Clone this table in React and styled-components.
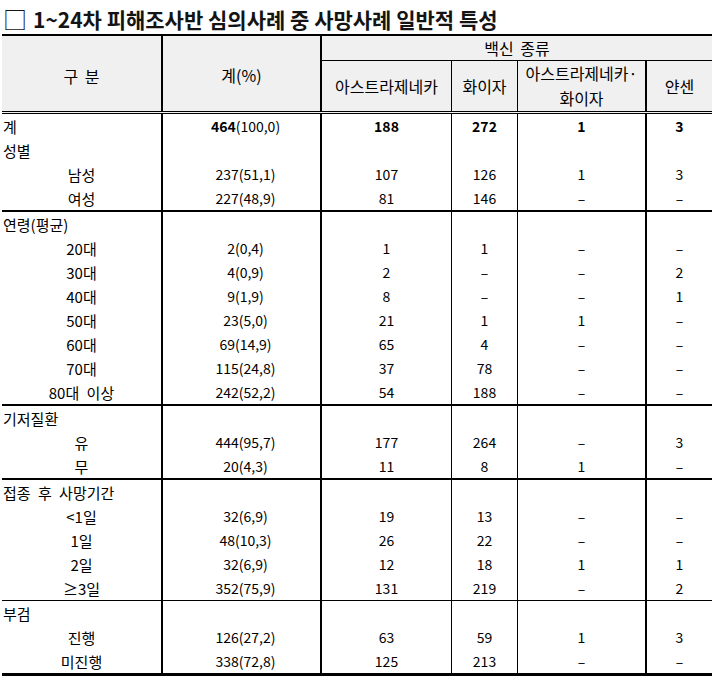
import styled, { createGlobalStyle } from "styled-components";

const GlobalStyle = createGlobalStyle`
  body {
    margin: 0;
    background: #fff;
    color: #000;
    font-family: "Noto Sans CJK KR", "Noto Sans", sans-serif;
  }
`;

// column widths include each cell's right border
const COLS = "161px 159px 130px 66px 129px 65px";
const EDGES = ["2px", "2px", "1px", "1px", "2px", "0"];

const groups = [
    {
        line: "2px solid #000",
        rows: [
            { label: "계", top: true, bold: true, total: ["464", "(100,0)"], values: ["188", "272", "1", "3"] },
            { label: "성별", top: true },
            { label: "남성", total: "237(51,1)", values: ["107", "126", "1", "3"] },
            { label: "여성", total: "227(48,9)", values: ["81", "146", "–", "–"] },
        ],
    },
    {
        line: "2px solid #000",
        rows: [
            { label: "연령(평균)", top: true },
            { label: "20대", total: "2(0,4)", values: ["1", "1", "–", "–"] },
            { label: "30대", total: "4(0,9)", values: ["2", "–", "–", "2"] },
            { label: "40대", total: "9(1,9)", values: ["8", "–", "–", "1"] },
            { label: "50대", total: "23(5,0)", values: ["21", "1", "1", "–"] },
            { label: "60대", total: "69(14,9)", values: ["65", "4", "–", "–"] },
            { label: "70대", total: "115(24,8)", values: ["37", "78", "–", "–"] },
            { label: "80대 이상", total: "242(52,2)", values: ["54", "188", "–", "–"] },
        ],
    },
    {
        line: "2px solid #000",
        rows: [
            { label: "기저질환", top: true },
            { label: "유", total: "444(95,7)", values: ["177", "264", "–", "3"] },
            { label: "무", total: "20(4,3)", values: ["11", "8", "1", "–"] },
        ],
    },
    {
        line: "1px solid #000",
        rows: [
            { label: "접종 후 사망기간", top: true },
            { label: "<1일", total: "32(6,9)", values: ["19", "13", "–", "–"] },
            { label: "1일", total: "48(10,3)", values: ["26", "22", "–", "–"] },
            { label: "2일", total: "32(6,9)", values: ["12", "18", "1", "1"] },
            { label: "≥3일", total: "352(75,9)", values: ["131", "219", "–", "2"] },
        ],
    },
    {
        line: "none",
        rows: [
            { label: "부검", top: true },
            { label: "진행", total: "126(27,2)", values: ["63", "59", "1", "3"] },
            { label: "미진행", total: "338(72,8)", values: ["125", "213", "–", "–"] },
        ],
    },
];

const App = () => {
    return (
        <>
            <GlobalStyle />
            <Page>
                <Title>
                    <Bullet>□</Bullet>
                    1~24차 피해조사반 심의사례 중 사망사례 일반적 특성
                </Title>
                <Table>
                    <Head>
                        <HeadCell $area="1 / 1 / 3 / 2" $edge={EDGES[0]} $pad="6px">구 분</HeadCell>
                        <HeadCell $area="1 / 2 / 3 / 3" $edge={EDGES[1]} $pad="3px">계(%)</HeadCell>
                        <HeadCell $area="1 / 3 / 2 / 7" $edge="0" $under>백신 종류</HeadCell>
                        <HeadCell $area="2 / 3 / 3 / 4" $edge={EDGES[2]}>아스트라제네카</HeadCell>
                        <HeadCell $area="2 / 4 / 3 / 5" $edge={EDGES[3]}>화이자</HeadCell>
                        <HeadCell $area="2 / 5 / 3 / 6" $edge={EDGES[4]}>아스트라제네카·<br />화이자</HeadCell>
                        <HeadCell $area="2 / 6 / 3 / 7" $edge={EDGES[5]}>얀센</HeadCell>
                    </Head>
                    {groups.map((group, gi) => (
                        <Group key={gi} $line={group.line}>
                            {group.rows.map((row, ri) => (
                                <Row key={ri} row={row} />
                            ))}
                        </Group>
                    ))}
                </Table>
            </Page>
        </>
    );
};

const Row = ({ row }) => {
    const values = row.values || ["", "", "", ""];
    return (
        <>
            <Label $edge={EDGES[0]} $top={row.top}>{row.label}</Label>
            <Cell $edge={EDGES[1]} $pad="8px">
                {Array.isArray(row.total)
                    ? <><Strong>{row.total[0]}</Strong>{row.total[1]}</>
                    : row.total}
            </Cell>
            {values.map((v, i) => (
                <Cell key={i} $edge={EDGES[i + 2]} $bold={row.bold}>{v}</Cell>
            ))}
        </>
    );
};

const Page = styled.div`
    width: 712px;
`;

const Title = styled.h1`
    margin: 0;
    height: 34px;
    padding: 3px 0 0 3px;
    box-sizing: border-box;
    display: flex;
    align-items: center;
    font-size: 21px;
    font-weight: 700;
    color: #141414;
    white-space: nowrap;
`;

const Bullet = styled.span`
    font-size: 24px;
    font-weight: 400;
    margin-right: 6px;
`;

const Table = styled.div`
    margin-left: 2px;
    width: 710px;
    border-top: 2px solid #000;
    border-bottom: 3px solid #000;
`;

const Head = styled.div`
    display: grid;
    grid-template-columns: ${COLS};
    grid-template-rows: 25px 50px;
    background: #f0f0f0;
    border-bottom: 3px double #000;
    font-size: 16px;
    line-height: 25px;
    word-spacing: 3px;
`;

const HeadCell = styled.div`
    grid-area: ${p => p.$area};
    display: flex;
    align-items: center;
    justify-content: center;
    text-align: center;
    box-sizing: border-box;
    padding-top: ${p => p.$pad || "0"};
    border-right: ${p => p.$edge} solid #000;
    border-bottom: ${p => (p.$under ? "1px solid #000" : "none")};
`;

const Group = styled.div`
    display: grid;
    grid-template-columns: ${COLS};
    grid-auto-rows: 24px;
    border-bottom: ${p => p.$line};
    font-size: 14px;
`;

const Cell = styled.div`
    display: flex;
    align-items: center;
    justify-content: center;
    box-sizing: border-box;
    padding-left: ${p => p.$pad || "0"};
    border-right: ${p => p.$edge} solid #000;
    font-weight: ${p => (p.$bold ? 700 : 400)};
    line-height: 1;
    white-space: nowrap;
`;

const Label = styled(Cell)`
    justify-content: ${p => (p.$top ? "flex-start" : "center")};
    padding-left: ${p => (p.$top ? "1px" : "0")};
    font-size: 15px;
    word-spacing: 4px;
`;

const Strong = styled.b`
    font-weight: 700;
`;

export default App;
